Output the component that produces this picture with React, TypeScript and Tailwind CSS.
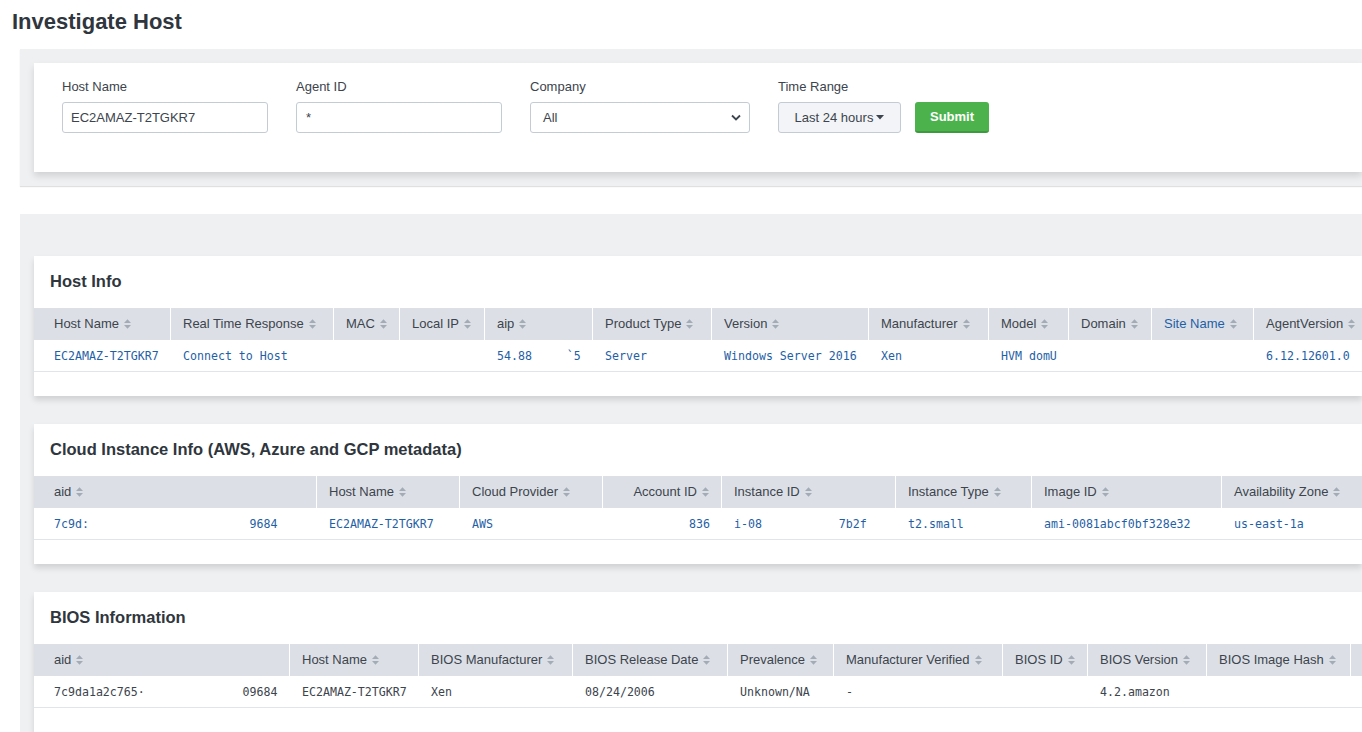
import React from "react";

type Col = {
  label: string;
  w: string;
  value?: string;
  right?: boolean;
  link?: boolean;
};

const sans = "font-['Liberation_Sans',Arial,sans-serif]";
const mono = "font-['DejaVu_Sans_Mono','Liberation_Mono',monospace]";

const hostCols: Col[] = [
  { label: "Host Name", w: "w-[137px]", value: "EC2AMAZ-T2TGKR7" },
  { label: "Real Time Response", w: "w-[163px]", value: "Connect to Host" },
  { label: "MAC", w: "w-[66px]", value: "" },
  { label: "Local IP", w: "w-[85px]", value: "" },
  { label: "aip", w: "w-[108px]", value: "54.88     `5" },
  { label: "Product Type", w: "w-[119px]", value: "Server" },
  { label: "Version", w: "w-[157px]", value: "Windows Server 2016" },
  { label: "Manufacturer", w: "w-[120px]", value: "Xen" },
  { label: "Model", w: "w-[80px]", value: "HVM domU" },
  { label: "Domain", w: "w-[83px]", value: "" },
  { label: "Site Name", w: "w-[102px]", value: "", link: true },
  { label: "AgentVersion", w: "w-[150px]", value: "6.12.12601.0" },
];

const cloudCols: Col[] = [
  { label: "aid", w: "w-[283px]", value: "7c9d:                       9684" },
  { label: "Host Name", w: "w-[143px]", value: "EC2AMAZ-T2TGKR7" },
  { label: "Cloud Provider", w: "w-[143px]", value: "AWS" },
  { label: "Account ID", w: "w-[119px]", value: "836", right: true },
  { label: "Instance ID", w: "w-[174px]", value: "i-08           7b2f" },
  { label: "Instance Type", w: "w-[136px]", value: "t2.small" },
  { label: "Image ID", w: "w-[190px]", value: "ami-0081abcf0bf328e32" },
  { label: "Availability Zone", w: "w-[160px]", value: "us-east-1a" },
];

const biosCols: Col[] = [
  { label: "aid", w: "w-[256px]", value: "7c9da1a2c765·              09684" },
  { label: "Host Name", w: "w-[129px]", value: "EC2AMAZ-T2TGKR7" },
  { label: "BIOS Manufacturer", w: "w-[154px]", value: "Xen" },
  { label: "BIOS Release Date", w: "w-[155px]", value: "08/24/2006" },
  { label: "Prevalence", w: "w-[106px]", value: "Unknown/NA" },
  { label: "Manufacturer Verified", w: "w-[169px]", value: "-" },
  { label: "BIOS ID", w: "w-[85px]", value: "" },
  { label: "BIOS Version", w: "w-[119px]", value: "4.2.amazon" },
  { label: "BIOS Image Hash", w: "w-[144px]", value: "" },
  { label: "", w: "w-[60px]", value: "" },
];

const SortIcon = () => (
  <svg width="7" height="10" viewBox="0 0 8 11" className="ml-[5px] shrink-0" fill="#a3abb5">
    <path d="M4 0 L8 4.3 H0 Z" />
    <path d="M0 6.7 H8 L4 11 Z" />
  </svg>
);

function Panel({ title, cols, blue }: { title: string; cols: Col[]; blue: boolean }) {
  return (
    <div className="ml-[14px] h-[140px] overflow-hidden bg-white shadow-[0_4px_6px_rgba(0,0,0,0.13)]">
      <div className="h-[52px] pl-4 pt-[15px] text-[16.5px] leading-[20px] font-bold text-[#2f363d]">{title}</div>
      <div className="flex h-[32px] bg-[#dce0e6]">
        {cols.map((c, i) => (
          <div
            key={i}
            className={`${c.w} flex shrink-0 items-center border-r border-white text-[13px] ${
              i === 0 ? "pl-5" : "pl-3"
            } ${c.right ? "justify-end pr-3" : ""} ${c.link ? "text-[#1f5fa6]" : "text-[#3c444d]"}`}
          >
            {c.label && (
              <>
                <span className="whitespace-nowrap">{c.label}</span>
                <SortIcon />
              </>
            )}
          </div>
        ))}
      </div>
      <div className="flex h-[32px] border-b border-[#e1e5ea]">
        {cols.map((c, i) => (
          <div
            key={i}
            className={`${c.w} flex shrink-0 items-center pt-[2px] ${mono} text-[11.6px] whitespace-pre ${
              i === 0 ? "pl-5" : "pl-3"
            } ${c.right ? "justify-end pr-3" : ""} ${blue ? "text-[#1f5fa6]" : "text-[#3c444d]"}`}
          >
            {c.value}
          </div>
        ))}
      </div>
    </div>
  );
}

function Field({ label, children }: { label: string; children: React.ReactNode }) {
  return (
    <div className="flex flex-col">
      <label className="h-[16px] text-[13px] leading-[16px] text-[#3c444d]">{label}</label>
      <div className="mt-[7px]">{children}</div>
    </div>
  );
}

export default function App() {
  return (
    <div className={`h-[732px] w-[1362px] overflow-hidden bg-white ${sans} text-[#3c444d]`}>
      <h1 className="h-[49px] pl-3 pt-[8px] text-[22px] leading-[28px] font-semibold text-[#2f363d]">
        Investigate Host
      </h1>

      {/* search form */}
      <div className="ml-5 bg-[#eef0f2] py-[14px] shadow-[0_1px_1px_rgba(0,0,0,0.12)]">
        <div className="ml-[14px] flex h-[109px] items-start gap-7 bg-white pl-7 pt-4 shadow-[0_4px_7px_rgba(0,0,0,0.13)]">
          <Field label="Host Name">
            <input
              readOnly
              value="EC2AMAZ-T2TGKR7"
              className="h-[31px] w-[206px] rounded-[3px] border border-[#c3cbd4] bg-white px-2 text-[13px] text-[#3c444d] outline-none"
            />
          </Field>
          <Field label="Agent ID">
            <input
              readOnly
              value="*"
              className="h-[31px] w-[206px] rounded-[3px] border border-[#c3cbd4] bg-white px-[9px] text-[13px] text-[#3c444d] outline-none"
            />
          </Field>
          <Field label="Company">
            <div className="flex h-[31px] w-[220px] items-center justify-between rounded-[3px] border border-[#c3cbd4] bg-white pl-3 pr-[8px] text-[13px]">
              <span>All</span>
              <svg width="10" height="7" viewBox="0 0 10 7" fill="none" stroke="#3c444d" strokeWidth="1.8">
                <path d="M1 1.5 L5 5.5 L9 1.5" />
              </svg>
            </div>
          </Field>
          <div className="flex items-end gap-[14px]">
            <Field label="Time Range">
              <div className="flex h-[31px] w-[123px] items-center justify-center rounded-[3px] border border-[#c3cbd4] bg-[#f3f4f7] text-[13px] text-[#3c444d]">
                Last 24 hours
                <svg width="8" height="5" viewBox="0 0 8 5" className="ml-[3px]" fill="#3c444d">
                  <path d="M0 0 H8 L4 4.5 Z" />
                </svg>
              </div>
            </Field>
            <button className="h-[31px] w-[74px] rounded-[3px] border-b-2 border-[#3e9a3e] bg-[#4cb34c] text-[13px] font-bold text-white">
              Submit
            </button>
          </div>
        </div>
      </div>

      {/* results */}
      <div className="mt-7 ml-5 flex flex-col gap-7 bg-[#eef0f2] pt-[42px] pb-7">
        <Panel title="Host Info" cols={hostCols} blue />
        <Panel title="Cloud Instance Info (AWS, Azure and GCP metadata)" cols={cloudCols} blue />
        <Panel title="BIOS Information" cols={biosCols} blue={false} />
      </div>
    </div>
  );
}
